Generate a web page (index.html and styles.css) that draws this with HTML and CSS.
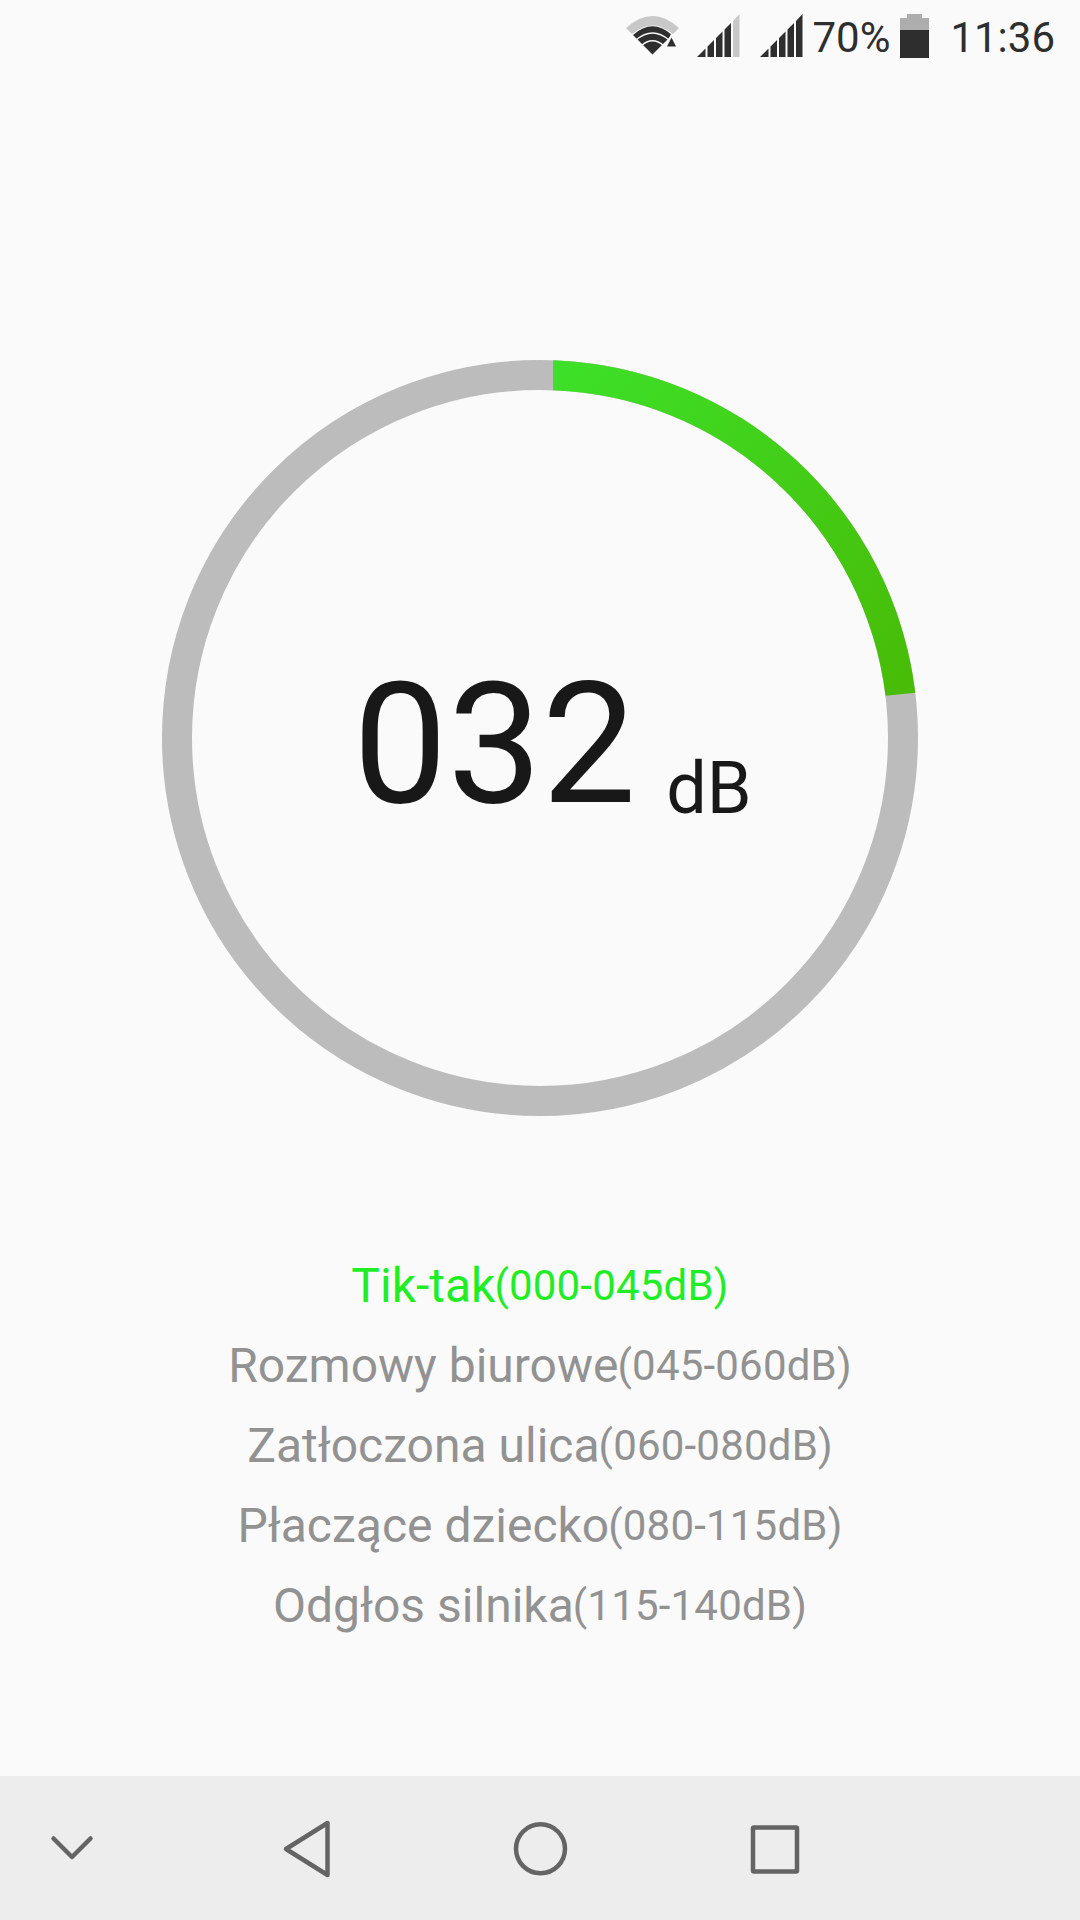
FILE: index.html
```html
<!DOCTYPE html>
<html lang="pl">
<head>
    <meta charset="UTF-8">
    <meta name="viewport" content="width=device-width, initial-scale=1.0">
    <title>Sound Meter</title>
    <link rel="stylesheet" href="styles.css">
</head>
<body>
    <div class="screen">
        <header class="status-bar">
            <svg class="wifi" width="54" height="40" viewBox="0 0 54 40">
                <path fill="#c8c8c8" d="M0 12Q26.5 -12 53 12L47 18Q26.5 1 6 18Z"/>
                <path fill="#2e2e2e" d="M7 19Q26.5 1.500 46 19L26.500 38.500Z"/>
                <g fill="none" stroke="#fafafa" stroke-width="1.500">
                    <path d="M10 24Q26.500 10 43 24"/>
                    <path d="M15 30Q26.500 19.500 38 30"/>
                </g>
                <path fill="#fafafa" d="M45.500 17L53 32H38Z"/>
                <path fill="#2e2e2e" d="M45.500 21.500L50 30.500H41Z"/>
            </svg>
            <svg class="signal" width="43" height="43" viewBox="0 0 43 43">
                <path fill="#2e2e2e" d="M0 43L8.500 34.500V43ZM10.500 43V32.500L17 26V43ZM19 43V24L25.500 17.500V43ZM27.500 43V15.500L34 9V43Z"/>
                <path fill="#c8c8c8" d="M36 43V7L42.500 0V43Z"/>
            </svg>
            <svg class="signal" width="43" height="43" viewBox="0 0 43 43">
                <path fill="#2e2e2e" d="M0 43L8.500 34.500V43ZM10.500 43V32.500L17 26V43ZM19 43V24L25.500 17.500V43ZM27.500 43V15.500L34 9V43ZM36 43V7L42.500 0V43Z"/>
            </svg>
            <span class="battery-level">70%</span>
            <svg class="battery" width="29" height="44" viewBox="0 0 29 44">
                <path fill="#adadad" d="M7 0H22V4H29V16H0V4H7Z"/>
                <path fill="#2e2e2e" d="M0 16H29V44H0Z"/>
            </svg>
            <span class="clock">11:36</span>
        </header>

        <main>
            <div class="gauge">
                <svg class="ring" width="756" height="756" viewBox="0 0 756 756">
                    <defs>
                        <linearGradient id="level" gradientUnits="userSpaceOnUse" x1="390" y1="15" x2="738" y2="334">
                            <stop offset="0" stop-color="#3de028"/>
                            <stop offset="1" stop-color="#48bc07"/>
                        </linearGradient>
                    </defs>
                    <circle cx="378" cy="378" r="363" fill="none" stroke="#bcbcbc" stroke-width="30"/>
                    <path d="M391 .2A378 378 0 0 1 753.300 332.800L723.500 335.700A348 348 0 0 0 391 30.200Z" fill="url(#level)"/>
                </svg>
                <div class="reading">
                    <span class="value">032</span>
                    <span class="unit">dB</span>
                </div>
            </div>

            <ul class="levels">
                <li class="active"><span>Tik-tak</span><small>(000-045dB)</small></li>
                <li><span>Rozmowy biurowe</span><small>(045-060dB)</small></li>
                <li><span>Zatłoczona ulica</span><small>(060-080dB)</small></li>
                <li><span>Płaczące dziecko</span><small>(080-115dB)</small></li>
                <li><span>Odgłos silnika</span><small>(115-140dB)</small></li>
            </ul>
        </main>

        <nav class="nav-bar">
            <svg class="hide" width="44" height="60" viewBox="0 0 44 60">
                <path d="M3.500 20.500L22 39L40.500 20.500"/>
            </svg>
            <svg class="back" width="60" height="60" viewBox="0 0 60 60">
                <path d="M49.500 5V57L8 31Z"/>
            </svg>
            <svg class="home" width="60" height="60" viewBox="0 0 60 60">
                <circle cx="30.500" cy="30.800" r="24.500"/>
            </svg>
            <svg class="recent" width="60" height="60" viewBox="0 0 60 60">
                <rect x="9" y="9.500" width="44" height="44" rx="1"/>
            </svg>
        </nav>
    </div>
</body>
</html>
```

FILE: styles.css
```css
body {
    margin: 0;
    font-family: Roboto, sans-serif;
    background-color: #fafafa;
    color: #181818;
}
.screen {
    display: flex;
    flex-direction: column;
    height: 1920px;
    width: 1080px;
    overflow: hidden;
}

/* Status bar */
.status-bar {
    display: flex;
    justify-content: flex-end;
    align-items: flex-start;
    box-sizing: border-box;
    height: 72px;
    padding: 14px 25px 0 0;
    font-size: 42px;
    line-height: 48px;
    color: #2e2e2e;
}
.wifi {
    margin: 2px 17px 0 0;
}
.signal {
    margin-right: 20px;
}
.signal + .signal {
    margin-right: 9px;
}
.battery {
    margin: 0 21px 0 10px;
}

/* Meter */
main {
    flex-grow: 1;
}
.gauge {
    display: grid;
    width: 756px;
    height: 756px;
    margin: 288px auto 0;
}
.ring, .reading {
    grid-area: 1 / 1;
}
.reading {
    display: flex;
    align-items: flex-start;
    padding: 287px 0 0 191px;
}
.value {
    font-size: 168px;
    line-height: 196px;
}
.unit {
    margin: 100px 0 0 30px;
    font-size: 72px;
    line-height: 84px;
}

/* Noise levels */
.levels {
    list-style: none;
    margin: 130px 0 0;
    padding: 0;
    color: #929292;
}
.levels li {
    display: flex;
    justify-content: center;
    align-items: center;
    height: 80px;
    font-size: 48px;
    line-height: 80px;
}
.levels small {
    margin-left: -1px;
    font-size: 42px;
    letter-spacing: 0.2px;
}
.levels .active {
    color: #1fee26;
}

/* Navigation bar */
.nav-bar {
    display: flex;
    align-items: center;
    height: 144px;
    padding-left: 50px;
    background-color: #ededed;
}
.nav-bar svg {
    fill: none;
    stroke: #646464;
    stroke-width: 4.5;
    stroke-linecap: round;
    stroke-linejoin: round;
}
.back {
    margin-left: 184px;
}
.home {
    margin-left: 172px;
}
.recent {
    margin-left: 174px;
}
```
